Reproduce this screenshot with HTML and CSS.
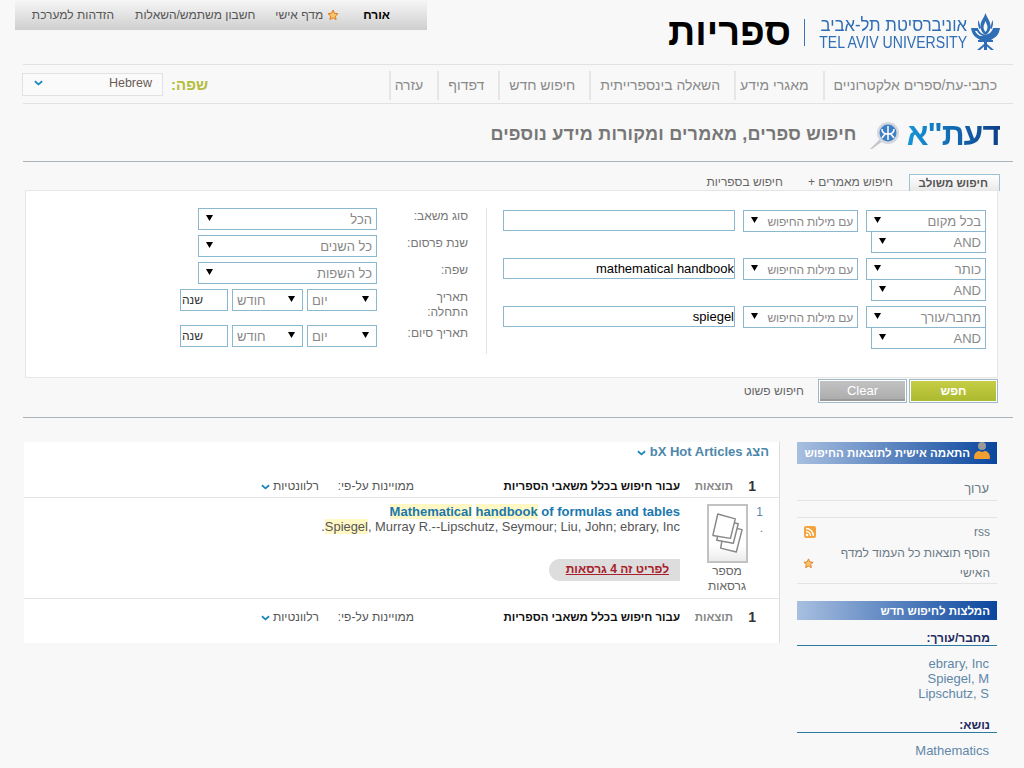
FILE: index.html
```html
<!DOCTYPE html>
<html lang="he" dir="rtl">
<head>
    <meta charset="UTF-8">
    <title>ספריות - דעת"א</title>
    <link rel="stylesheet" href="styles.css">
</head>
<body>
    <header class="top">
        <div class="brand">
            <svg class="emblem" viewBox="0 0 29 37" width="29" height="37" fill="#2f6db5">
                <path fill-rule="evenodd" d="M14.500 0c1.500 5 5 8 5 13s-3 8-5 9c-2-1-5-4-5-9s3.500-8 5-13zM14.500 8c-.8 2.500-2 4-2 6s1 4 2 5c1-1 2-3 2-5s-1.200-3.500-2-6z"/>
                <path d="M7.500 7c-1 3-.5 6 1 9l1.500-1c-1-2.500-1.500-5-2.500-8zM21.500 7c1 3 .5 6-1 9l-1.500-1c1-2.500 1.500-5 2.500-8z"/>
                <path fill-rule="evenodd" d="M0 15h7c1 4 4 6 7.500 7 3.500-1 6.500-3 7.500-7h7c-1 6-3 8-6 10l-3 2H9l-3-2C3 23 1 21 0 15zM4 18c1 2 3 4 5 5h3c-3-1-5-3-6-5z"/>
                <path d="M7 27h15v2h-6v2l7 6h-3l-4-3.500V37h-3v-3.500L9 37H6l7-6v-2H7z"/>
            </svg>
            <div class="tau">
                <span class="tau-he">אוניברסיטת תל-אביב</span>
                <span class="tau-en" dir="ltr">TEL AVIV UNIVERSITY</span>
            </div>
            <h1 class="site-name">ספריות</h1>
        </div>
        <div class="userbar">
            <span class="guest">אורח</span>
            <a href="#" class="shelf">
                <svg class="star" viewBox="0 0 12 12" width="12" height="12"><path d="M6 1l1.500 3.300 3.500.4-2.600 2.400.7 3.500L6 8.800l-3.100 1.800.7-3.500L1 4.700l3.500-.4z" fill="#f6c56b" stroke="#e07b20"/></svg>
                מדף אישי
            </a>
            <a href="#">חשבון משתמש/השאלות</a>
            <a href="#" class="login">הזדהות למערכת</a>
        </div>
    </header>

    <nav class="mainnav">
        <a href="#">כתבי-עת/ספרים אלקטרוניים</a>
        <a href="#" class="tight">מאגרי מידע</a>
        <a href="#">השאלה בינספרייתית</a>
        <a href="#">חיפוש חדש</a>
        <a href="#">דפדוף</a>
        <a href="#" class="tight">עזרה</a>
        <div class="lang">
            <span class="lang-label">שפה:</span>
            <div class="lang-box">
                <span>Hebrew</span>
                <svg class="chev" viewBox="0 0 10 6" width="9" height="6"><path d="M1 1l4 3.500L9 1" fill="none" stroke="#1c86bd" stroke-width="2"/></svg>
            </div>
        </div>
    </nav>

    <section class="titlebar">
        <span class="daat">דעת"א</span>
        <svg class="glass" viewBox="0 0 29 27" width="29" height="27">
            <path d="M0 27l10-10 3 2-11 8z" fill="#c4c8cc"/>
            <circle cx="18" cy="11" r="11" fill="#d3d8e0"/>
            <circle cx="18" cy="11" r="8.500" fill="#3f7fc4"/>
            <path d="M18 4v14M12 7c0 4 3 5 6 5s6-1 6-5M12 16l3-4M24 16l-3-4" fill="none" stroke="#fff" stroke-width="1.500"/>
        </svg>
        <h2>חיפוש ספרים, מאמרים ומקורות מידע נוספים</h2>
    </section>

    <main class="search">
        <div class="tabs">
            <a href="#" class="tab active">חיפוש משולב</a>
            <a href="#" class="tab articles">חיפוש מאמרים +</a>
            <a href="#" class="tab">חיפוש בספריות</a>
        </div>
        <form class="panel">
            <div class="queries">
                <div class="query">
                    <div class="query-where">
                        <select class="field where"><option>בכל מקום</option></select>
                        <select class="field oper"><option>AND</option></select>
                    </div>
                    <select class="field how"><option>עם מילות החיפוש</option></select>
                    <input class="field term" type="text" value="">
                </div>
                <div class="query">
                    <div class="query-where">
                        <select class="field where"><option>כותר</option></select>
                        <select class="field oper"><option>AND</option></select>
                    </div>
                    <select class="field how"><option>עם מילות החיפוש</option></select>
                    <input class="field term" type="text" value="mathematical handbook">
                </div>
                <div class="query">
                    <div class="query-where">
                        <select class="field where"><option>מחבר/עורך</option></select>
                        <select class="field oper"><option>AND</option></select>
                    </div>
                    <select class="field how"><option>עם מילות החיפוש</option></select>
                    <input class="field term" type="text" value="spiegel">
                </div>
            </div>
            <div class="filters">
                <label>סוג משאב:</label>
                <select class="field wide"><option>הכל</option></select>
                <label>שנת פרסום:</label>
                <select class="field wide"><option>כל השנים</option></select>
                <label>שפה:</label>
                <select class="field wide"><option>כל השפות</option></select>
                <label>תאריך התחלה:</label>
                <div class="dates">
                    <select class="field day" dir="ltr"><option>יום</option></select>
                    <select class="field month" dir="ltr"><option>חודש</option></select>
                    <input class="field year" type="text" value="שנה">
                </div>
                <label class="end-label">תאריך סיום:</label>
                <div class="dates end-date">
                    <select class="field day" dir="ltr"><option>יום</option></select>
                    <select class="field month" dir="ltr"><option>חודש</option></select>
                    <input class="field year" type="text" value="שנה">
                </div>
            </div>
        </form>
        <div class="actions">
            <button type="button" class="btn go">חפש</button>
            <button type="button" class="btn clear">Clear</button>
            <a href="#" class="simple">חיפוש פשוט</a>
        </div>
    </main>

    <div class="results-area">
        <aside class="side">
            <h3 class="side-head">
                <svg class="person" viewBox="0 0 16 18" width="16" height="18">
                    <circle cx="8" cy="4" r="4" fill="#999"/>
                    <path d="M0 16c0-5 3-7 5-7l3 1 3-1c2 0 5 2 5 7 0 1-1 1-2 1H2c-1 0-2 0-2-1z" fill="#f0a030"/>
                </svg>
                התאמה אישית לתוצאות החיפוש
            </h3>
            <div class="side-edit"><a href="#">ערוך</a></div>
            <div class="side-blank"></div>
            <div class="side-tools">
                <div class="tool rss-row">
                    <a href="#">rss</a>
                    <svg viewBox="0 0 12 12" width="12" height="12">
                        <rect width="12" height="12" rx="2" fill="#f4a33c"/>
                        <circle cx="3" cy="9" r="1.300" fill="#fff"/>
                        <path d="M2 5.500a4.500 4.500 0 0 1 4.500 4.500M2 2.500A7.500 7.500 0 0 1 9.500 10" fill="none" stroke="#fff" stroke-width="1.400"/>
                    </svg>
                </div>
                <div class="tool shelf-row">
                    <a href="#">הוסף תוצאות כל העמוד למדף האישי</a>
                    <svg viewBox="0 0 12 12" width="11" height="11"><path d="M6 1l1.500 3.300 3.500.4-2.600 2.400.7 3.500L6 8.800l-3.100 1.800.7-3.500L1 4.700l3.500-.4z" fill="#f6c56b" stroke="#e07b20"/></svg>
                </div>
            </div>
            <h3 class="side-head second">המלצות לחיפוש חדש</h3>
            <h4 class="facet">מחבר/עורך:</h4>
            <ul class="facet-list">
                <li><a href="#">ebrary, Inc</a></li>
                <li><a href="#">Spiegel, M</a></li>
                <li><a href="#">Lipschutz, S</a></li>
            </ul>
            <h4 class="facet topic">נושא:</h4>
            <ul class="facet-list">
                <li><a href="#">Mathematics</a></li>
            </ul>
        </aside>

        <section class="results">
            <div class="hot">
                <a href="#">הצג bX Hot Articles
                    <svg class="chev" viewBox="0 0 10 6" width="9" height="6"><path d="M1 1l4 3.500L9 1" fill="none" stroke="#1c86bd" stroke-width="2"/></svg>
                </a>
            </div>
            <div class="count-row">
                <b class="count">1</b>
                <span class="count-word">תוצאות</span>
                <b class="count-for">עבור חיפוש בכלל משאבי הספריות</b>
                <span class="sort">ממויינות על-פי:</span>
                <a href="#" class="sort-val">רלוונטיות
                    <svg class="chev" viewBox="0 0 10 6" width="9" height="6"><path d="M1 1l4 3.500L9 1" fill="none" stroke="#1c86bd" stroke-width="2"/></svg>
                </a>
            </div>
            <article class="item">
                <div class="item-num">1<br>.</div>
                <div class="item-thumb">
                    <div class="thumb-box">
                        <svg viewBox="0 0 38 56" width="37" height="55" fill="#fff" stroke="#888" stroke-width="1.500" stroke-linejoin="round">
                            <path d="M16 20l18 4-6 23-16-4z"/>
                            <path d="M12 14l18 4-5 20-17-3z"/>
                            <path d="M9 8l18 5-5 20-18-3z"/>
                        </svg>
                    </div>
                    <span>מספר גרסאות</span>
                </div>
                <div class="item-body">
                    <h5 dir="ltr"><a href="#"><mark>Mathematical</mark> <mark>handbook</mark> of formulas and tables</a></h5>
                    <p><mark>Spiegel</mark><span>, Murray R.--Lipschutz, Seymour; Liu, John; ebrary, Inc</span><span>.</span></p>
                    <a href="#" class="versions">לפריט זה 4 גרסאות</a>
                </div>
            </article>
            <div class="count-row bottom">
                <b class="count">1</b>
                <span class="count-word">תוצאות</span>
                <b class="count-for">עבור חיפוש בכלל משאבי הספריות</b>
                <span class="sort">ממויינות על-פי:</span>
                <a href="#" class="sort-val">רלוונטיות
                    <svg class="chev" viewBox="0 0 10 6" width="9" height="6"><path d="M1 1l4 3.500L9 1" fill="none" stroke="#1c86bd" stroke-width="2"/></svg>
                </a>
            </div>
        </section>
    </div>
</body>
</html>
```

FILE: styles.css
```css
/* General Reset */
* {
    margin: 0;
    padding: 0;
    box-sizing: border-box;
}

html {
    overflow: hidden;
}

body {
    font-family: "Liberation Sans", Arial, sans-serif;
    font-size: 12px;
    background: #f8f8f8;
    color: #666;
    height: 768px;
    overflow: hidden;
}

a {
    color: inherit;
    text-decoration: none;
}

/* Header */
.top {
    display: flex;
    justify-content: space-between;
    height: 64px;
    padding: 0 24px 0 15px;
}

.brand {
    display: flex;
    align-items: flex-start;
    padding-top: 13px;
}

.emblem {
    margin-left: 4px;
}

.tau {
    display: flex;
    flex-direction: column;
    width: 148px;
    margin-top: 3px;
    color: #2f6db5;
    font-size: 18px;
    line-height: 18px;
    white-space: nowrap;
}

.tau-he {
    display: block;
    transform: scaleX(.93);
    transform-origin: right;
}

.tau-en {
    display: block;
    width: 168px;
    font-size: 16px;
    transform: scaleX(.88);
    transform-origin: right;
}

.site-name {
    margin-top: 6px;
    margin-right: 14px;
    padding-right: 13px;
    height: 27px;
    border-right: 1px solid #3b74bb;
    color: #000;
    font-size: 38px;
    line-height: 27px;
}

.userbar {
    display: flex;
    align-items: center;
    width: 412px;
    height: 30px;
    padding-right: 37px;
    background: linear-gradient(to bottom, #f6f6f6, #cfcfcf);
    color: #555;
}

.userbar a {
    margin-right: 20px;
    white-space: nowrap;
}

.userbar .login {
    margin-right: 21px;
}

.guest {
    color: #000;
    font-weight: bold;
    margin-left: 4px;
}

.shelf {
    display: flex;
    align-items: center;
    gap: 4px;
}

/* Main nav */
.mainnav {
    display: flex;
    align-items: center;
    height: 40px;
    margin: 0 11px 0 23px;
    padding-top: 2px;
    border-top: 1px solid #e2e2e2;
    border-bottom: 1px solid #e2e2e2;
    font-size: 14px;
    color: #8a8a8a;
}

.mainnav > a {
    height: 29px;
    line-height: 29px;
    padding: 0 14px 0 9px;
    border-left: 2px solid #e6e6e6;
    white-space: nowrap;
}

.mainnav > a:first-child {
    padding-right: 16px;
}

.mainnav > a.tight {
    padding-left: 4px;
}

.lang {
    display: flex;
    align-items: center;
    margin-top: -2px;
    margin-right: auto;
    margin-left: -1px;
    gap: 8px;
}

.lang-label {
    color: #b4bd3a;
    font-size: 15px;
    font-weight: bold;
}

.lang-box {
    display: flex;
    justify-content: space-between;
    align-items: center;
    width: 141px;
    height: 23px;
    padding: 0 10px 2px 11px;
    background: #fafafa;
    border: 1px solid #e2e2e2;
    color: #6b5a55;
    font-size: 12.500px;
}

/* Title */
.titlebar {
    display: flex;
    align-items: center;
    height: 58px;
    margin: 0 11px 0 23px;
    padding: 3px 13px 0 0;
    border-bottom: 1px solid #aab2ba;
}

.daat {
    font-size: 32px;
    line-height: 36px;
    font-weight: bold;
    letter-spacing: -1px;
    background: linear-gradient(to right, #1695d8, #0e3f8a);
    -webkit-background-clip: text;
    background-clip: text;
    color: transparent;
    white-space: nowrap;
}

.glass {
    margin: 2px 8px 0 13px;
}

.titlebar h2 {
    color: #777;
    font-size: 18px;
    letter-spacing: .2px;
    white-space: nowrap;
}

/* Search form */
.search {
    margin-top: 12px;
    padding: 0 26px 0 25px;
}

.tabs {
    display: flex;
    align-items: flex-start;
    height: 16px;
    margin-right: -2px;
}

.tab {
    position: relative;
    margin-left: 25px;
    color: #666;
    font-size: 12px;
    line-height: 17px;
}

.tab.active {
    z-index: 1;
    width: 91px;
    height: 17px;
    padding-right: 11px;
    margin-left: 16px;
    border: 1px solid #9cc2d6;
    border-bottom: 0;
    background: linear-gradient(to bottom, #fff, #e8e8e8);
    font-size: 11.500px;
    font-weight: bold;
    color: #555;
}

.panel {
    display: flex;
    height: 188px;
    padding: 17px 11px 0 0;
    background: #fff;
    border: 1px solid #e6e6e6;
}

.queries {
    width: 500px;
    height: 146px;
    padding-top: 2px;
    padding-left: 16px;
    border-left: 1px solid #e4e4e4;
}

.query {
    display: flex;
    align-items: flex-start;
    height: 48px;
}

.query-where {
    display: flex;
    flex-direction: column;
    align-items: flex-start;
    width: 120px;
    margin-left: 8px;
}

.field {
    display: block;
    height: 22px;
    border: 1px solid #8ab8d0;
    border-radius: 0;
    background-color: #fff;
    color: #888;
    font-family: inherit;
    font-size: 13px;
    outline: none;
}

select.field {
    appearance: none;
    -webkit-appearance: none;
    padding: 1px 4px 0 0;
    background-image: url("data:image/svg+xml,%3Csvg xmlns='http://www.w3.org/2000/svg' width='7' height='6'%3E%3Cpath d='M0 0h7L3.500 6z' fill='%23000'/%3E%3C/svg%3E");
    background-repeat: no-repeat;
    background-position: left 7px top 6px;
}

select.day,
select.month {
    padding: 1px 0 0 4px;
    background-position: right 7px top 6px;
}

.where {
    width: 120px;
}

.oper {
    width: 115px;
    margin-top: -1px;
    padding-top: 0;
}

.how {
    width: 115px;
    margin-left: 8px;
    font-size: 12px;
    letter-spacing: -.2px;
}

.term {
    width: 232px;
    height: 21px;
    padding: 0;
    color: #000;
    font-size: 13px;
}

.filters {
    display: grid;
    grid-template-columns: 91px 197px;
    grid-auto-rows: 27px;
    align-items: start;
    margin-right: 18px;
}

.filters label {
    padding: 1px 0 0 18px;
    line-height: 15px;
    color: #777;
}

.wide {
    width: 179px;
}

.dates {
    display: flex;
    gap: 4px;
    width: 197px;
    height: 22px;
}

.end-date,
.end-label {
    margin-top: 9px;
}

.day {
    width: 70px;
}

.month {
    width: 71px;
}

.year {
    width: 48px;
    padding: 0 0 0 1px;
    color: #333;
    font-size: 12px;
    text-align: left;
}

.actions {
    display: flex;
    align-items: center;
    height: 25px;
    gap: 2px;
}

.btn {
    width: 89px;
    height: 24px;
    border: 1px solid #9fb8c8;
    font-family: inherit;
    font-size: 13px;
    color: #fff;
    outline: 1px solid #fff;
    outline-offset: -2px;
}

.go {
    background: linear-gradient(to bottom, #c7ce45, #aab92e);
    font-size: 12px;
    font-weight: bold;
}

.clear {
    background: linear-gradient(to bottom, #c4c4c4, #a9a9a9);
    box-shadow: inset 0 -3px 0 #999;
}

.simple {
    margin-right: 12px;
    color: #666;
}

/* Results */
.results-area {
    display: flex;
    align-items: flex-start;
    margin-top: 14px;
    margin-left: 23px;
    margin-right: 11px;
    padding-top: 24px;
    padding-right: 16px;
    border-top: 1px solid #aab2ba;
}

.side {
    width: 200px;
    flex-shrink: 0;
}

.side-head {
    position: relative;
    height: 22px;
    padding-right: 27px;
    background: linear-gradient(to right, #a8bfe0, #0a469e);
    color: #fff;
    font-size: 11.500px;
    line-height: 22px;
}

.person {
    position: absolute;
    right: 7px;
    top: 0;
}

.side-head.second {
    height: 19px;
    margin-top: 17px;
    padding-right: 7px;
    line-height: 20px;
}

.side-edit {
    height: 37px;
    padding: 17px 8px 0 0;
    border-bottom: 1px solid #e4e4e4;
    color: #6c7a85;
    font-size: 13px;
}

.side-blank {
    height: 17px;
    border-bottom: 1px solid #e4e4e4;
}

.side-tools {
    height: 66px;
    padding-top: 7px;
    border-bottom: 1px solid #e4e4e4;
    color: #6c7a85;
}

.tool {
    display: flex;
    justify-content: space-between;
    align-items: center;
    padding: 0 7px 0 7px;
}

.rss-row {
    height: 14px;
    margin-bottom: 4px;
}

.shelf-row {
    line-height: 20px;
    padding-left: 6px;
}

.shelf-row a {
    width: 152px;
}

.facet {
    height: 26px;
    padding: 12px 7px 0 0;
    border-bottom: 1px solid #2a7ba0;
    color: #1f2a60;
    font-size: 12px;
    line-height: 13px;
}

.facet-list {
    list-style: none;
    padding: 10px 8px 0 0;
    font-size: 13px;
    line-height: 15px;
    color: #5f87a8;
}

.facet.topic {
    margin-top: 6px;
}

.results {
    width: 756px;
    height: 201px;
    margin-right: 17px;
    background: #fff;
    border-right: 1px solid #ddd;
}

.hot {
    height: 34px;
    padding: 2px 10px 0 0;
    color: #4d87ab;
    font-weight: bold;
    font-size: 13px;
    line-height: 15px;
}

.count-row {
    display: flex;
    align-items: center;
    height: 22px;
    padding-bottom: 2px;
    border-bottom: 1px solid #e4e4e4;
    color: #555;
}

.count-row.bottom {
    height: 36px;
    padding: 0;
    border: 0;
}

.count {
    width: 46px;
    padding-right: 23px;
    color: #333;
    font-size: 14px;
}

.count-word {
    width: 53px;
    color: #888;
    font-size: 11.500px;
    font-weight: bold;
    white-space: nowrap;
}

.count-for {
    width: 266px;
    color: #111;
    font-size: 11.500px;
    white-space: nowrap;
}

.sort {
    width: 95px;
    white-space: nowrap;
}

.sort-val {
    white-space: nowrap;
}

.item {
    display: flex;
    height: 101px;
    padding-top: 6px;
    border-bottom: 1px solid #e4e4e4;
}

.item-num {
    width: 31px;
    padding-right: 16px;
    line-height: 16px;
    color: #5f87a8;
}

.item-thumb {
    width: 42px;
    text-align: center;
    color: #666;
    line-height: 15px;
}

.thumb-box {
    display: flex;
    align-items: center;
    justify-content: center;
    width: 41px;
    height: 59px;
    margin-bottom: 1px;
    border: 2px solid #c2c2c2;
    background: linear-gradient(to bottom, #fff 72%, #ebebeb);
}

.item-body {
    flex: 1;
    margin-right: 26px;
}

.item-body h5 {
    color: #1a78ae;
    font-size: 13px;
    line-height: 15px;
    text-align: right;
}

.item-body p {
    color: #555;
    font-size: 12.900px;
    line-height: 15px;
}

mark {
    background: #fff8c4;
    color: inherit;
}

.versions {
    display: inline-block;
    width: 131px;
    height: 22px;
    margin-top: 25px;
    padding: 0 11px;
    background: #ddd;
    border-top-left-radius: 11px;
    border-bottom-left-radius: 11px;
    color: #a8202a;
    font-size: 12px;
    font-weight: bold;
    line-height: 20px;
    text-decoration: underline;
    white-space: nowrap;
}
```
